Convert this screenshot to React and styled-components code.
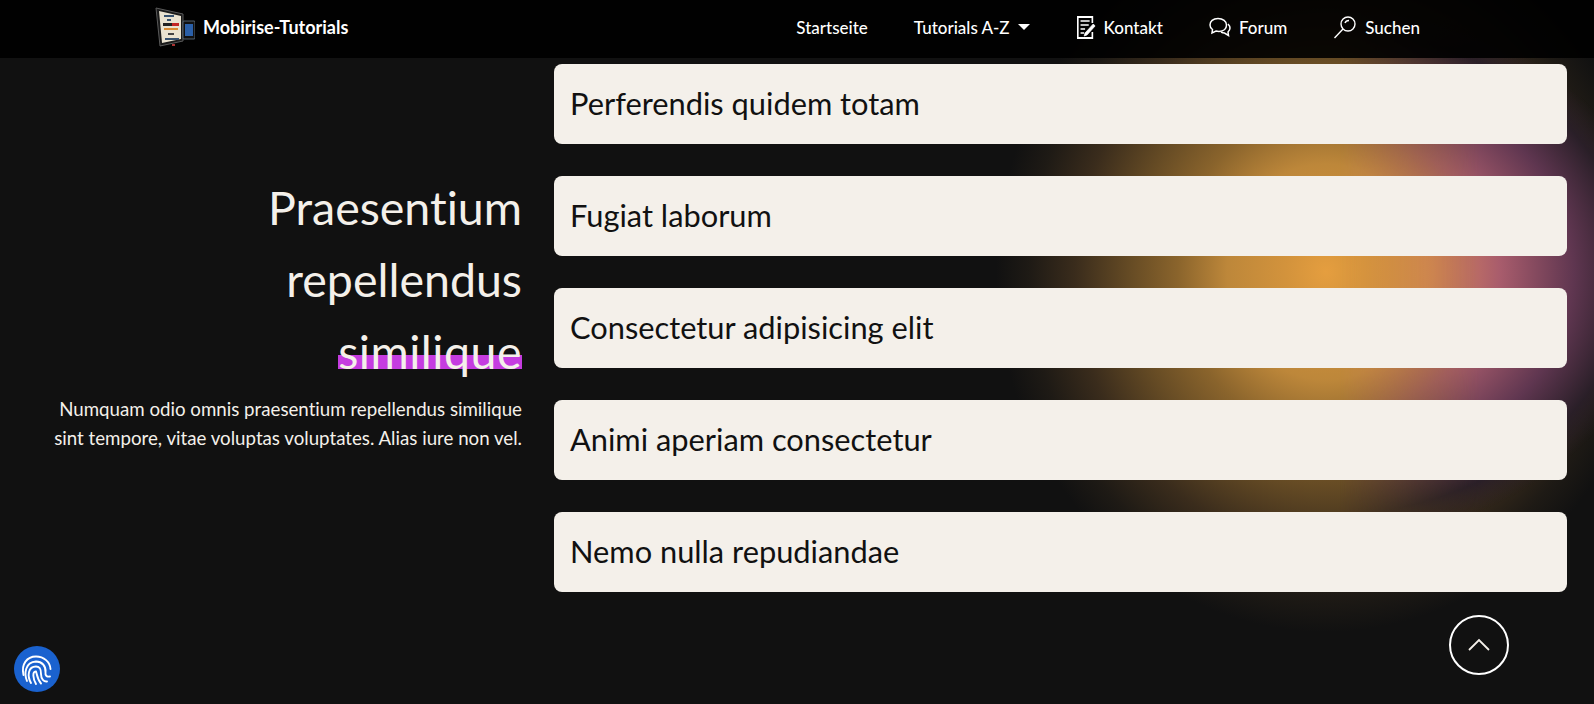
import React from 'react';
import styled, { createGlobalStyle } from 'styled-components';

const GlobalStyle = createGlobalStyle`
  html, body { margin: 0; padding: 0; background: #111; }
  body { font-family: "Lato", "Liberation Sans", sans-serif; font-variant-ligatures: none; overflow: hidden; }
  * { box-sizing: border-box; }
`;

const Page = styled.div`
  position: relative;
  isolation: isolate;
  width: 1594px;
  height: 704px;
  overflow: hidden;
  background:
    radial-gradient(ellipse 330px 360px at 1326px 272px, #e59e3f 0%, #d3933c 12%, #bd873a 30%, #8a642c 45%, #644a24 60%, #3a2c1c 76%, #1e1a15 90%, #111 100%),
    #111;

  /* the pink side of the glow only shows right of its centre */
  &::before {
    content: '';
    position: absolute;
    inset: 0;
    z-index: -1;
    background: radial-gradient(ellipse 335px 270px at 1326px 272px, #e59e3f 0%, #d8855c 32%, #a85c6c 52%, #5f3650 74%, #2a1f28 90%, rgba(17, 17, 17, 0) 100%);
    mask-image: linear-gradient(90deg, transparent 1340px, #000 1480px);
  }
`;

const Navbar = styled.nav`
  height: 58px;
  background: rgba(0, 0, 0, .9);
  display: flex;
  align-items: center;
  justify-content: space-between;
  padding: 0 174px 4px 155px;
`;

const Brand = styled.a`
  display: flex;
  align-items: center;
  gap: 8px;
  color: #fff;
  font-size: 18px;
  font-weight: 700;
`;

const NavLinks = styled.div`
  display: flex;
  align-items: center;
  gap: 46px;
`;

const NavLink = styled.a`
  display: flex;
  align-items: center;
  gap: 8px;
  color: #fff;
  font-size: 17px;
  font-weight: 500;
`;

const Caret = styled.span`
  width: 0;
  height: 0;
  border-left: 6px solid transparent;
  border-right: 6px solid transparent;
  border-top: 6px solid #fff;
`;

const Section = styled.section`
  display: grid;
  grid-template-columns: 522px 1013px;
  column-gap: 32px;
  padding-top: 6px;
`;

const Intro = styled.div`
  text-align: right;
  padding-top: 107px;
`;

const Title = styled.h2`
  margin: 0 0 8px;
  color: #f4f0ea;
  font-size: 46.5px;
  font-weight: 400;
  line-height: 72px;
`;

const Marked = styled.span`
  letter-spacing: .5px;
  background: linear-gradient(transparent 57%, #c53ce0 57%, #c53ce0 83%, transparent 83%);
`;

const Lead = styled.p`
  margin: 0;
  color: #f4f0ea;
  font-size: 18.7px;
  line-height: 28.8px;
`;

const Cards = styled.div`
  display: flex;
  flex-direction: column;
  gap: 32px;
`;

const Card = styled.div`
  height: 80px;
  display: flex;
  align-items: center;
  padding: 0 16px 2px;
  border-radius: 8px;
  background: #f4f0ea;
  color: #111;
  font-size: 30.8px;
`;

const ScrollTop = styled.a`
  position: absolute;
  left: 1449px;
  top: 615px;
  width: 60px;
  height: 60px;
  display: flex;
  align-items: center;
  justify-content: center;
  border: 2px solid #fff;
  border-radius: 50%;
`;

const PrivacyBadge = styled.a`
  position: absolute;
  left: 14px;
  top: 646px;
  width: 46px;
  height: 46px;
  border-radius: 50%;
  background: #1a62cf;
`;

const Logo = () => (
  <svg width="40" height="40" viewBox="0 0 40 40">
    <path d="M1 1 L28 7 L28 34 L5 39 Z" fill="#1a1a1a" stroke="#5a5a5a" strokeWidth="1" />
    <path d="M4 4 L26 9 L26 32 L7 36 Z" fill="#e9e2d0" />
    <rect x="9" y="8" width="10" height="2" fill="#35506e" />
    <rect x="12" y="12" width="4" height="2" fill="#35506e" />
    <rect x="8" y="16" width="9" height="3" fill="#222" />
    <rect x="17" y="16" width="7" height="3" fill="#c22525" />
    <rect x="9" y="21" width="14" height="2" fill="#d98a33" />
    <rect x="13" y="26" width="6" height="2" fill="#444" />
    <rect x="10" y="31" width="14" height="2" fill="#35506e" />
    <rect x="17" y="37" width="3" height="2" fill="#a33" />
    <rect x="28" y="14" width="12" height="18" rx="1" fill="#111" stroke="#678" strokeWidth=".8" />
    <rect x="30" y="17" width="8" height="12" fill="#2a5fa8" />
  </svg>
);

const NoteIcon = () => (
  <svg width="20" height="24" viewBox="0 0 22 24" preserveAspectRatio="none" fill="none" stroke="#fff">
    <path d="M18 8 V2 H2 V23 H18 V17" strokeWidth="1.8" />
    <path d="M5 6 H15 M5 10 H14 M5 14 H10 M5 18 H9" strokeWidth="1.6" />
    <path d="M10 18 L19 9 L21 11 L12 20 L9 21 Z" fill="#fff" strokeWidth=".8" />
  </svg>
);

const ChatIcon = () => (
  <svg width="22" height="20" viewBox="0 0 22 20" fill="none" stroke="#fff" strokeWidth="1.5">
    <path d="M9 1.5 C4 1.5 1 4.5 1 8 C1 10 2 11.5 3.5 12.5 L3 16 L7 14 C8 14.3 9 14.4 10 14.4 C15 14.4 17.5 11.5 17.5 8 C17.5 4.5 14 1.5 9 1.5 Z" />
    <path d="M19 7 C20.5 8.5 21 10 21 11 C21 13 20 14 19 15 L19.5 18.5 L15.5 16 C14 16 13 15.6 12 15" />
  </svg>
);

const SearchIcon = () => (
  <svg width="24" height="24" viewBox="0 0 24 24" fill="none" stroke="#fff" strokeWidth="1.4">
    <circle cx="15" cy="9" r="7" />
    <path d="M10 14 L1.5 23" />
    <path d="M12 8 C12.5 6.5 14 5.5 16 5.5" />
  </svg>
);

const ChevronUp = () => (
  <svg width="24" height="14" viewBox="0 0 24 14" fill="none" stroke="#f4f0ea" strokeWidth="1.8">
    <path d="M2 12 L12 2 L22 12" />
  </svg>
);

const Fingerprint = () => (
  <svg width="46" height="46" viewBox="0 0 46 46" fill="none" stroke="#fff" strokeWidth="1.9" strokeLinecap="round">
    <path d="M9.5 29 C7 18 13 10.5 22 10.5 C30 10.5 36 16 36.5 23" />
    <path d="M13 35 C10 28 11 16 22 15.5 C28 15.5 32 20 31.5 26 C31 30 33 31 36 30.5" />
    <path d="M17 37 C13 30 14 20.5 22 20.5 C27 20.5 27 25 27 28 C27 33 30 36 33 35.5" />
    <path d="M22 38 C19 33 18 25 22 25.5 C23 28 23 33 27 37.5" />
  </svg>
);

const items = [
  'Perferendis quidem totam',
  'Fugiat laborum',
  'Consectetur adipisicing elit',
  'Animi aperiam consectetur',
  'Nemo nulla repudiandae',
];

export default function App() {
  return (
    <Page>
      <GlobalStyle />
      <Navbar>
        <Brand>
          <Logo />
          Mobirise-Tutorials
        </Brand>
        <NavLinks>
          <NavLink>Startseite</NavLink>
          <NavLink>Tutorials A-Z <Caret /></NavLink>
          <NavLink><NoteIcon /> Kontakt</NavLink>
          <NavLink><ChatIcon /> Forum</NavLink>
          <NavLink><SearchIcon /> Suchen</NavLink>
        </NavLinks>
      </Navbar>
      <Section>
        <Intro>
          <Title>
            Praesentium<br />repellendus<br /><Marked>similique</Marked>
          </Title>
          <Lead>
            Numquam odio omnis praesentium repellendus similique<br />
            sint tempore, vitae voluptas voluptates. Alias iure non vel.
          </Lead>
        </Intro>
        <Cards>
          {items.map((item) => (
            <Card key={item}>{item}</Card>
          ))}
        </Cards>
      </Section>
      <ScrollTop><ChevronUp /></ScrollTop>
      <PrivacyBadge><Fingerprint /></PrivacyBadge>
    </Page>
  );
}
